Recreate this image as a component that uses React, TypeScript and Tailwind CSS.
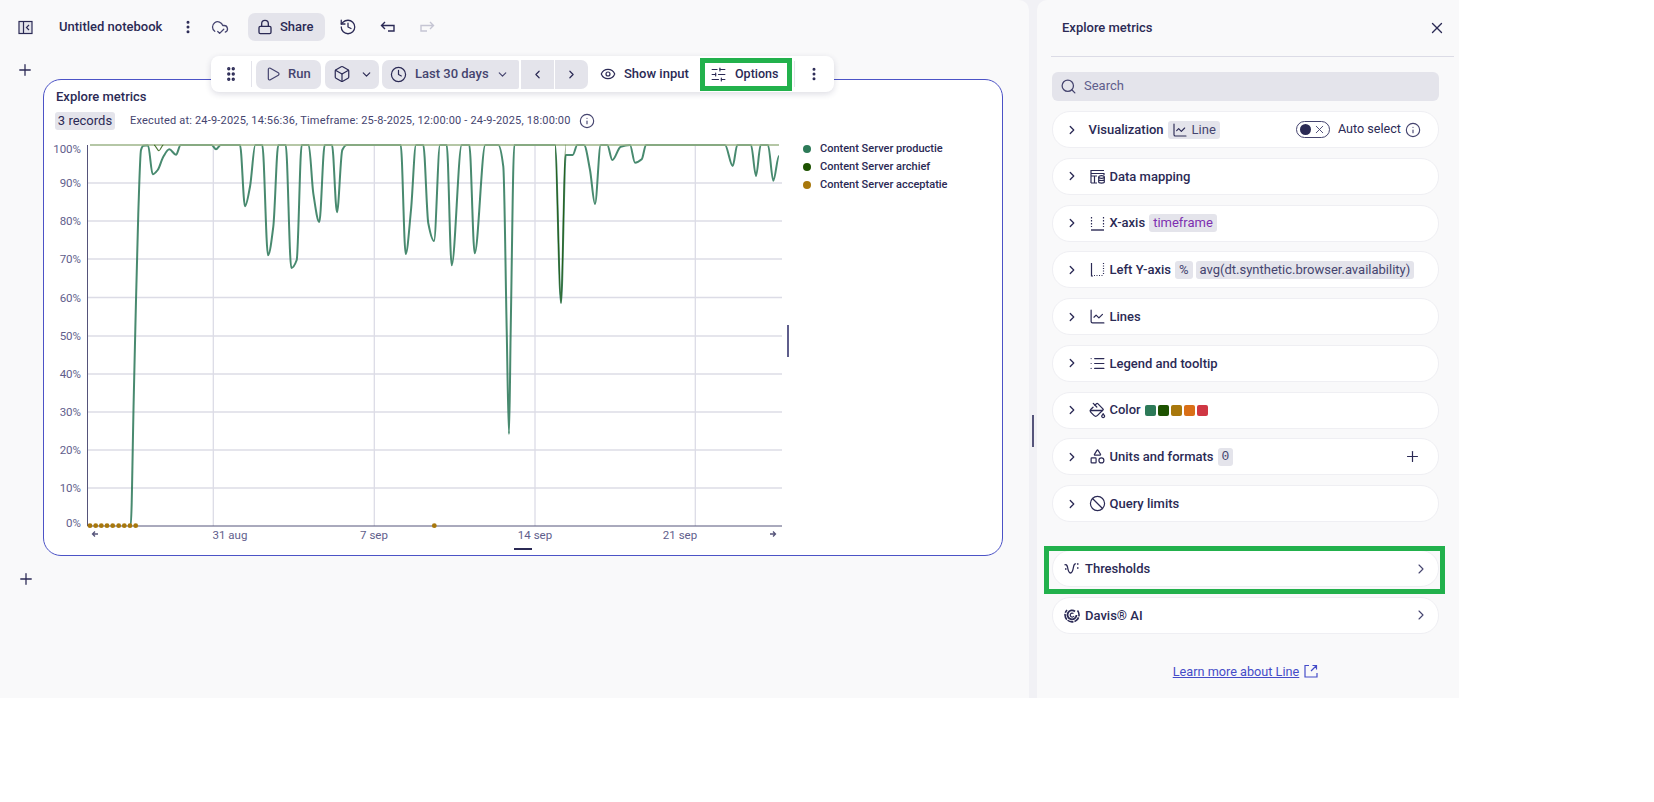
import React from 'react';
import {
  Ban, Box, ChartLine, ChevronDown, ChevronLeft, ChevronRight, Clock, CloudCheck, EllipsisVertical, Eye, GripVertical,
  History, Info, List, Lock, PaintBucket, Play, Plus, Search, Shapes, SlidersHorizontal, X,
} from 'lucide-react';

type Pt = [number, number];

const production: Pt[] = [
  [130.7, 525.7], [133.7, 400], [135.3, 330], [138.3, 213], [141, 150], [143.3, 145.7], [148, 145.3], [152.7, 174.3], [157.7, 170], [163.3, 156.7],
  [169.3, 149.3], [176, 154.7], [180.7, 145], [211.7, 145], [216, 149.3], [220.7, 145], [240, 145], [245, 206.3], [250, 186.7], [255.3, 145],
  [262.3, 145], [268, 255.3], [273.3, 226.7], [278.3, 145], [285.7, 145], [291.3, 268], [296.7, 260], [301.7, 145], [308.7, 145], [313.3, 193.3],
  [319.3, 222], [324.7, 145], [332, 145], [337, 212.3], [342.3, 150], [346.7, 145], [400.7, 145], [405.7, 254], [411, 210], [416, 145],
  [423.3, 145], [428.3, 223.3], [434, 241], [440, 145], [446.7, 145], [451.7, 265.3], [461.7, 145], [469.3, 145], [474.7, 253.3], [485.3, 145],
  [498.3, 145], [503.3, 166.7], [506.7, 330], [509, 434], [510.7, 330], [514.3, 145], [555, 145], [561, 303], [565.7, 155], [572.7, 155],
  [577.3, 145], [584, 145], [590, 170], [595, 204], [600.7, 145], [607.3, 145], [612.3, 160], [620.7, 146.7], [630, 145], [635, 162.7],
  [641.7, 159.3], [646, 145], [725, 145], [732.7, 166], [737.3, 145], [751, 145], [756, 176], [760.7, 145], [768, 145], [773.3, 180.7], [779, 156],
];

// the archive series only leaves 100% twice
const archiveDips: Pt[][] = [
  [[154, 145], [159, 150.7], [163.3, 145]],
  [[555, 145], [561, 303], [565.7, 145]],
];
const acceptDots = [90, 95.7, 101.3, 107, 112.7, 118.7, 124.3, 130, 135.7, 434.3];
const yTicks: [string, number, number][] = [
  ['100%', 145, 149], ['90%', 183, 183], ['80%', 221, 221], ['70%', 259, 259], ['60%', 297.5, 297.5], ['50%', 336, 336],
  ['40%', 374, 374], ['30%', 412, 412], ['20%', 450, 450], ['10%', 488, 488], ['0%', 526, 523],
];
const xTicks: [string, number, number][] = [['31 aug', 213.3, 230], ['7 sep', 374.3, 374], ['14 sep', 535, 535], ['21 sep', 695.3, 680]];

// monotone cubic so the dips don't overshoot the 100% line
function linePath(pts: Pt[]) {
  const n = pts.length;
  const m = pts.map((p, i) => {
    if (i === 0 || i === n - 1) return 0;
    const a = (p[1] - pts[i - 1][1]) / (p[0] - pts[i - 1][0]);
    const b = (pts[i + 1][1] - p[1]) / (pts[i + 1][0] - p[0]);
    return a * b <= 0 ? 0 : (2 * a * b) / (a + b);
  });
  let d = `M${pts[0][0]} ${pts[0][1]}`;
  for (let i = 1; i < n; i++) {
    const h = (pts[i][0] - pts[i - 1][0]) / 3;
    d += `C${pts[i - 1][0] + h} ${pts[i - 1][1] + m[i - 1] * h} ${pts[i][0] - h} ${pts[i][1] - m[i] * h} ${pts[i][0]} ${pts[i][1]}`;
  }
  return d;
}

function Chart() {
  return (
    <svg width="746" height="412" viewBox="44 140 746 412" className="shrink-0 block">
      {yTicks.map(([label, y, ty]) => (
        <g key={label}>
          {label !== '0%' && label !== '100%' && <line x1="87" x2="782" y1={y} y2={y} stroke="#dcdce6" strokeWidth="1.300" />}
          <text x="81" y={ty + 4} textAnchor="end" fontSize="11.500" fill="#5f5e8c">{label}</text>
        </g>
      ))}
      {xTicks.map(([label, x, tx]) => (
        <g key={label}>
          <line x1={x} x2={x} y1="145" y2="526" stroke="#dcdce6" strokeWidth="1.300" />
          <text x={tx} y="539" textAnchor="middle" fontSize="11.500" fill="#5f5e8c">{label}</text>
        </g>
      ))}
      <path d="M87.5 145V526H782" fill="none" stroke="#55547a" strokeWidth="1" />
      <path d={linePath(production)} fill="none" stroke="#2f7a5b" strokeWidth="2" strokeOpacity="0.88" />
      <line x1="90" x2="779" y1="145" y2="145" stroke="#9db488" strokeWidth="1.500" />
      {archiveDips.map((dip, i) => (
        <path key={i} d={linePath(dip)} fill="none" stroke="#1d5200" strokeWidth="1.100" strokeOpacity="0.8" />
      ))}
      {acceptDots.map((x) => (
        <circle key={x} cx={x} cy="525.7" r="2.400" fill="#a8780c" />
      ))}
      <path d="M98 534H92.500M95 531.500L92.500 534L95 536.500" fill="none" stroke="#55547a" strokeWidth="1.300" />
      <path d="M770 534H775.500M773 531.500L775.500 534L773 536.500" fill="none" stroke="#55547a" strokeWidth="1.300" />
      <rect x="514" y="548" width="18" height="2" fill="#2b2a55" />
      <rect x="787" y="325" width="2" height="32" fill="#5f5e8c" />
    </svg>
  );
}

function Pill({ children, mono = false, purple = false }: { children: React.ReactNode; mono?: boolean; purple?: boolean }) {
  return (
    <span className={`h-[18px] px-1 rounded-[3px] bg-[#e4e4eb] flex items-center text-[13px] font-normal whitespace-nowrap ${purple ? 'text-[#7d2fb0]' : 'text-[#45446f]'} ${mono ? 'font-mono' : ''}`}>
      {children}
    </span>
  );
}

function AxisIcon({ left = false }: { left?: boolean }) {
  return (
    <svg width="15" height="15" viewBox="0 0 15 15" fill="none" stroke="#2b2a55" strokeWidth="1.200" className="shrink-0">
      {left ? (
        <>
          <path d="M1.500 1V14H3" />
          <path d="M4 13.500H14M13.500 1V12" strokeDasharray="1 1.500" />
        </>
      ) : (
        <>
          <path d="M1 14H14" strokeWidth="1.400" />
          <path d="M1.500 1V11M13.500 1V11" strokeDasharray="1.500 1.500" />
        </>
      )}
    </svg>
  );
}

function TableIcon() {
  return (
    <svg width="15" height="15" viewBox="0 0 15 15" fill="none" stroke="#2b2a55" strokeWidth="1.200" className="shrink-0">
      <path d="M1 14V1.500H14M1 4.500H14V6M1 14H7M4.500 7V14M1 7H7" />
      <ellipse cx="11.500" cy="8" rx="2.800" ry="1.300" />
      <path d="M8.700 8V13C8.700 14.400 14.300 14.400 14.300 13V8M8.700 10.500C8.700 11.800 14.300 11.800 14.300 10.500" />
    </svg>
  );
}

function ThresholdIcon() {
  return (
    <svg width="15" height="15" viewBox="0 0 15 15" fill="none" stroke="#2b2a55" strokeWidth="1.300" className="shrink-0">
      <path d="M.500 4C2 3 3 4 3.500 6C4 9 4.500 12 6.500 12C8.500 12 9 9 9.500 6C10 3 11 2.500 12 3" />
      <path d="M13 3H14.500M13 7H14.500M1 8H2.500" />
    </svg>
  );
}

function DavisIcon() {
  return (
    <svg width="16" height="16" viewBox="0 0 16 16" fill="none" stroke="#2b2a55" className="shrink-0">
      <path d="M13.500 3.500A7 7 0 1 1 3 3" strokeWidth="1.600" strokeDasharray="6 1" />
      <path d="M11 4.500A4.500 4.500 0 1 0 12.500 8" strokeWidth="1.800" />
      <path d="M9.500 6.500A2 2 0 1 0 10 9" strokeWidth="1.200" />
    </svg>
  );
}

function Row({ children, nav = false }: { children: React.ReactNode; nav?: boolean }) {
  return (
    <div className={`h-[37px] rounded-[18px] bg-white border border-[#efeff3] flex items-center text-[13px] font-medium text-[#2b2a55] shrink-0 ${nav ? 'pl-[11px] pr-[9px]' : 'pl-[12px] pr-[17px]'}`}>
      {children}
    </div>
  );
}

function Section({ icon, label, children }: { icon?: React.ReactNode; label: string; children?: React.ReactNode }) {
  return (
    <Row>
      <ChevronRight className="w-[14px] h-[14px] text-[#2b2a55] shrink-0 mr-[10.500px]" strokeWidth={2.200} />
      <span className="w-[15px] flex justify-center mr-[5px] shrink-0">{icon}</span>
      <span className="mr-[4px] whitespace-nowrap">{label}</span>
      {children}
    </Row>
  );
}

function NavRow({ icon, label }: { icon: React.ReactNode; label: string }) {
  return (
    <Row nav>
      <span className="mr-[6px] w-[15px] flex justify-center">{icon}</span>
      <span className="flex-1">{label}</span>
      <ChevronRight className="w-[16px] h-[16px] text-[#45446f]" strokeWidth={1.600} />
    </Row>
  );
}

const iconCls = 'w-[17px] h-[17px] text-[#2b2a55] shrink-0';

export default function App() {
  return (
    <div className="w-[1654px] h-[802px] bg-white overflow-hidden text-[#2b2a55]" style={{ fontFamily: 'Roboto, sans-serif' }}>
      <div className="flex h-[698px] w-[1459px] bg-[#f1f1f5]">
        <div className="w-[1029px] shrink-0 bg-[#f9f9fa] rounded-tr-[10px] relative">
          {/* notebook header */}
          <div className="h-[54px] flex items-center pl-[18px]">
            <svg width="15" height="15" viewBox="0 0 15 15" fill="none" stroke="#2b2a55" strokeWidth="1.200" className="shrink-0">
              <rect x="1" y="1.500" width="13" height="12" fill="#e4e4eb" />
              <path d="M5.500 1.500V13.500M11 5L8.500 7.500L11 10" />
            </svg>
            <span className="ml-[26px] w-[103px] text-[13px] font-medium whitespace-nowrap">Untitled notebook</span>
            <EllipsisVertical className="ml-[18px] w-[16px] h-[16px]" strokeWidth={2.500} />
            <CloudCheck className="ml-[15px] w-[18px] h-[18px] text-[#45446f]" strokeWidth={1.700} />
            <div className="ml-[19px] w-[77px] h-[28px] rounded-[7px] bg-[#e4e4eb] flex items-center pl-[9px] gap-[7px] text-[13px] font-medium">
              <Lock className="w-[16px] h-[16px]" strokeWidth={2} />
              Share
            </div>
            <History className="ml-[14px] w-[18px] h-[18px]" strokeWidth={1.700} />
            <svg width="16" height="14" viewBox="0 0 16 14" fill="none" stroke="#2b2a55" strokeWidth="1.400" className="ml-[23px]">
              <path d="M5 2L1.500 5.500L5 9M1.500 5.500H14V11H8" />
            </svg>
            <svg width="16" height="14" viewBox="0 0 16 14" fill="none" stroke="#c5c5d3" strokeWidth="1.400" className="ml-[23px]">
              <path d="M11 2L14.500 5.500L11 9M14.500 5.500H2V11H8" />
            </svg>
          </div>

          <div className="flex">
            <div className="w-[43px] shrink-0 flex justify-center pl-[7px] pt-[7px]">
              <Plus className="w-[18px] h-[18px]" strokeWidth={1.700} />
            </div>
            <div className="pt-[25px]">
              {/* result card */}
              <div className="w-[960px] h-[477px] rounded-[18px] border border-[#4c53c6] bg-white">
                <div className="pl-[12px] pt-[8px] text-[13px] font-medium leading-[18px]">Explore metrics</div>
                <div className="flex items-center pl-[11px] mt-[6px] h-[18px]">
                  <span className="h-[18px] w-[60px] rounded-[3px] bg-[#e4e4eb] flex items-center justify-center text-[13px] font-normal">3 records</span>
                  <span className="ml-[15px] text-[11px] text-[#45446f] whitespace-nowrap tracking-[0.185px]">
                    Executed at: 24-9-2025, 14:56:36, Timeframe: 25-8-2025, 12:00:00 - 24-9-2025, 18:00:00
                  </span>
                  <Info className="ml-[8px] w-[16px] h-[16px] text-[#45446f]" strokeWidth={1.700} />
                </div>
                <div className="flex mt-[9.500px]">
                  <Chart />
                  <div className="ml-[13px] pt-[1.500px] flex flex-col text-[11px] font-medium gap-[2px]">
                    {[
                      ['Content Server productie', 'bg-[#2d7a58]'],
                      ['Content Server archief', 'bg-[#1d5200]'],
                      ['Content Server acceptatie', 'bg-[#a8780c]'],
                    ].map(([name, color]) => (
                      <div key={name} className="flex items-center h-[16px]">
                        <span className={`w-[8px] h-[8px] rounded-full ${color}`} />
                        <span className="ml-[9px] whitespace-nowrap">{name}</span>
                      </div>
                    ))}
                  </div>
                </div>
              </div>
              <div className="-ml-[26px] mt-[14px]">
                <Plus className="w-[18px] h-[18px]" strokeWidth={1.700} />
              </div>
            </div>
          </div>

          {/* floating cell toolbar */}
          <div className="absolute left-[211px] top-[56px] w-[623px] h-[36px] rounded-[8px] bg-white shadow-[0_2px_6px_rgba(40,40,80,0.16)] flex items-center text-[13px] font-medium">
            <GripVertical className="ml-[11px] w-[18px] h-[18px] shrink-0" strokeWidth={2.500} />
            <span className="ml-[11px] w-px h-[26px] bg-[#e4e4eb]" />
            <div className="ml-[4px] w-[65px] h-[29px] rounded-[7px] bg-[#e4e4eb] flex items-center pl-[9px] gap-[7px] text-[#45446f]">
              <Play className="w-[16px] h-[16px]" strokeWidth={1.800} />
              Run
            </div>
            <div className="ml-[4px] w-[54px] h-[29px] rounded-[7px] bg-[#e4e4eb] flex items-center pl-[8px] gap-[9px]">
              <Box className="w-[18px] h-[18px]" strokeWidth={1.600} />
              <ChevronDown className="w-[13px] h-[13px]" strokeWidth={2.200} />
            </div>
            <div className="ml-[3px] w-[137px] h-[29px] rounded-l-[7px] rounded-r-[2px] bg-[#e4e4eb] flex items-center pl-[8px] text-[#45446f]">
              <Clock className="w-[17px] h-[17px] text-[#2b2a55]" strokeWidth={1.700} />
              <span className="ml-[8px] w-[72px] whitespace-nowrap">Last 30 days</span>
              <ChevronDown className="ml-[9px] w-[13px] h-[13px]" strokeWidth={2.200} />
            </div>
            <div className="ml-[2px] w-[33px] h-[29px] bg-[#e4e4eb] flex items-center justify-center">
              <ChevronLeft className="w-[13px] h-[13px]" strokeWidth={2.200} />
            </div>
            <div className="ml-[1px] w-[33px] h-[29px] rounded-r-[7px] bg-[#e4e4eb] flex items-center justify-center">
              <ChevronRight className="w-[13px] h-[13px]" strokeWidth={2.200} />
            </div>
            <Eye className="ml-[12px] w-[16px] h-[16px] shrink-0" strokeWidth={1.800} />
            <span className="ml-[8px] w-[64px] whitespace-nowrap">Show input</span>
            <div className="ml-[12px] w-[92px] h-[33px] border-[5px] border-[#22b14c] flex items-center pl-[5px] gap-[8px] shrink-0">
              <SlidersHorizontal className="w-[17px] h-[17px] shrink-0" strokeWidth={1.600} />
              <span className="text-[12.500px]">Options</span>
            </div>
            <span className="ml-[2px] w-px h-[26px] bg-[#e4e4eb]" />
            <EllipsisVertical className="ml-[11px] w-[16px] h-[16px]" strokeWidth={2.500} />
          </div>
        </div>

        {/* side panel */}
        <div className="ml-[8px] flex-1 bg-[#f9f9fa] rounded-tl-[10px] flex relative">
          <span className="absolute -left-[5px] top-[415px] w-[2px] h-[32px] bg-[#55547a]" />
          <div className="w-full">
            <div className="h-[57px] ml-[14px] mr-[5px] border-b border-[#dcdce6] flex items-center pl-[11px] pr-[8px] pb-[1px]">
              <span className="flex-1 text-[13px] font-medium">Explore metrics</span>
              <X className="w-[18px] h-[18px]" strokeWidth={1.800} />
            </div>
            <div className="ml-[15px] w-[387px] mt-[15px] flex flex-col">
              <div className="h-[29px] rounded-[6px] bg-[#e4e4eb] flex items-center pl-[8px] pb-[1px] text-[13px] text-[#5f5e8c]">
                <Search className="w-[17px] h-[17px] text-[#45446f]" strokeWidth={1.800} />
                <span className="ml-[7px]">Search</span>
              </div>
              <div className="mt-[10px] flex flex-col gap-[9.750px]">
                <Row>
                  <ChevronRight className="w-[14px] h-[14px] shrink-0 mr-[9.500px]" strokeWidth={2.200} />
                  <span className="mr-[4px]">Visualization</span>
                  <Pill>
                    <ChartLine className="w-[16px] h-[16px] mr-[4px] text-[#2b2a55]" strokeWidth={1.700} />
                    Line
                  </Pill>
                  <span className="flex-1" />
                  <span className="w-[34px] h-[17px] rounded-full border border-[#45446f] flex items-center pl-[3px] pr-[3px] justify-between">
                    <span className="w-[11px] h-[11px] rounded-full bg-[#2b2a55]" />
                    <X className="w-[13px] h-[13px] text-[#45446f]" strokeWidth={1.700} />
                  </span>
                  <span className="ml-[8px] mr-[4px] font-normal text-[12.600px]">Auto select</span>
                  <Info className="w-[16px] h-[16px] text-[#45446f]" strokeWidth={1.700} />
                </Row>
                <Section icon={<TableIcon />} label="Data mapping" />
                <Section icon={<AxisIcon />} label="X-axis">
                  <Pill purple>timeframe</Pill>
                </Section>
                <Section icon={<AxisIcon left />} label="Left Y-axis">
                  <Pill>%</Pill>
                  <span className="w-[3px]" />
                  <Pill>avg(dt.synthetic.browser.availability)</Pill>
                </Section>
                <Section icon={<ChartLine className={iconCls} strokeWidth={1.700} />} label="Lines" />
                <Section icon={<List className={iconCls} strokeWidth={1.700} />} label="Legend and tooltip" />
                <Section icon={<PaintBucket className={iconCls} strokeWidth={1.800} />} label="Color">
                  <span className="flex gap-[2px]">
                    {['bg-[#2d7a58]', 'bg-[#1d5200]', 'bg-[#a8780c]', 'bg-[#d96f17]', 'bg-[#cf3743]'].map((c) => (
                      <span key={c} className={`w-[11px] h-[11px] rounded-[2px] ${c}`} />
                    ))}
                  </span>
                </Section>
                <Section icon={<Shapes className={iconCls} strokeWidth={1.700} />} label="Units and formats">
                  <Pill mono>0</Pill>
                  <span className="flex-1" />
                  <Plus className="w-[17px] h-[17px]" strokeWidth={1.700} />
                </Section>
                <Section icon={<Ban className={iconCls} strokeWidth={1.700} />} label="Query limits" />
              </div>
              <div className="mt-[28px] flex flex-col gap-[9.750px] relative">
                <NavRow icon={<ThresholdIcon />} label="Thresholds" />
                <NavRow icon={<DavisIcon />} label="Davis® AI" />
                <span className="absolute -left-[8px] -top-[4px] w-[401px] h-[48px] border-[5px] border-[#22b14c]" />
              </div>
              <div className="mt-[28px] flex items-center justify-center text-[12.700px] text-[#454cc8]">
                <span className="underline font-normal">Learn more about Line</span>
                <svg width="14" height="14" viewBox="0 0 14 14" fill="none" stroke="#454cc8" strokeWidth="1.200" className="ml-[5px]">
                  <path d="M5 1.500H1V13H13V9M7 7L12.500 1.500M8.500 1.500H12.500V5.500" />
                </svg>
              </div>
            </div>
          </div>
        </div>
      </div>
    </div>
  );
}
